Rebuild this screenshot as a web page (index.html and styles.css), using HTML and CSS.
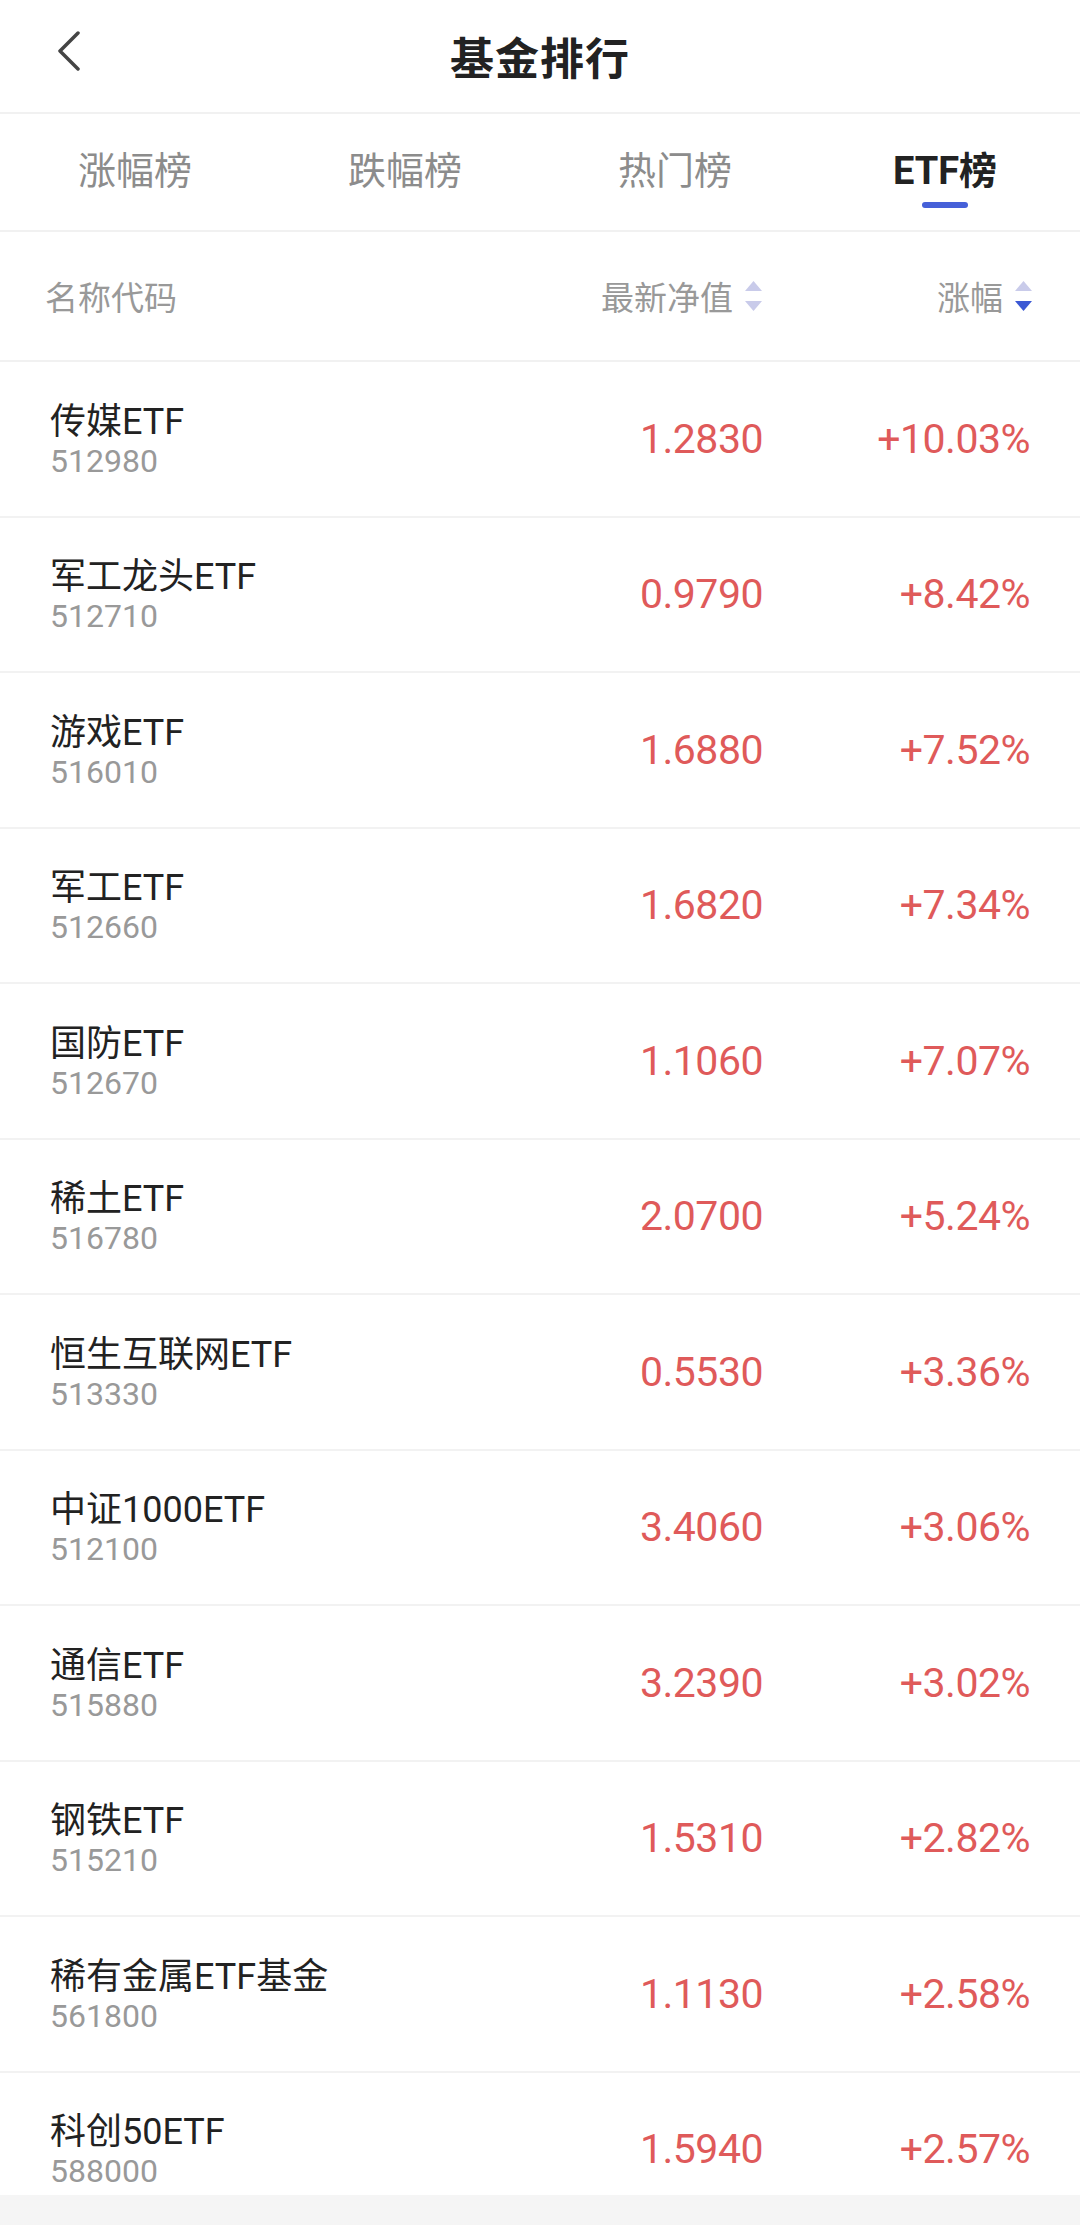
FILE: index.html
```html
<!DOCTYPE html>
<html lang="zh-CN">
<head>
    <meta charset="UTF-8">
    <meta name="viewport" content="width=device-width, initial-scale=1.0">
    <title>基金排行</title>
    <link rel="stylesheet" href="styles.css">
</head>
<body>
<div class="page">
    <header class="topbar">
        <svg class="back" width="24" height="40" viewBox="0 0 24 40"><polyline points="21,2 3,20 21,38" fill="none" stroke="#444" stroke-width="3.5" stroke-linecap="round" stroke-linejoin="round"/></svg>
        <h1>基金排行</h1>
    </header>

    <nav class="tabs">
        <div class="tab">涨幅榜</div>
        <div class="tab">跌幅榜</div>
        <div class="tab">热门榜</div>
        <div class="tab active">ETF榜</div>
    </nav>

    <div class="thead">
        <div class="th">名称代码</div>
        <div class="th right">最新净值
            <svg class="sort" width="17" height="30" viewBox="0 0 17 30"><polygon points="8.5,0 17,10 0,10" fill="#c9cbea"/><polygon points="0,20 17,20 8.5,30" fill="#c9cbea"/></svg>
        </div>
        <div class="th right">涨幅
            <svg class="sort" width="17" height="30" viewBox="0 0 17 30"><polygon points="8.5,0 17,10 0,10" fill="#c9cbea"/><polygon points="0,20 17,20 8.5,30" fill="#3c59d4"/></svg>
        </div>
    </div>

    <div class="list">
        <div class="row"><div class="fund"><div class="name">传媒ETF</div><div class="code">512980</div></div><div class="nav">1.2830</div><div class="pct">+10.03%</div></div>
        <div class="row"><div class="fund"><div class="name">军工龙头ETF</div><div class="code">512710</div></div><div class="nav">0.9790</div><div class="pct">+8.42%</div></div>
        <div class="row"><div class="fund"><div class="name">游戏ETF</div><div class="code">516010</div></div><div class="nav">1.6880</div><div class="pct">+7.52%</div></div>
        <div class="row"><div class="fund"><div class="name">军工ETF</div><div class="code">512660</div></div><div class="nav">1.6820</div><div class="pct">+7.34%</div></div>
        <div class="row"><div class="fund"><div class="name">国防ETF</div><div class="code">512670</div></div><div class="nav">1.1060</div><div class="pct">+7.07%</div></div>
        <div class="row"><div class="fund"><div class="name">稀土ETF</div><div class="code">516780</div></div><div class="nav">2.0700</div><div class="pct">+5.24%</div></div>
        <div class="row"><div class="fund"><div class="name">恒生互联网ETF</div><div class="code">513330</div></div><div class="nav">0.5530</div><div class="pct">+3.36%</div></div>
        <div class="row"><div class="fund"><div class="name">中证1000ETF</div><div class="code">512100</div></div><div class="nav">3.4060</div><div class="pct">+3.06%</div></div>
        <div class="row"><div class="fund"><div class="name">通信ETF</div><div class="code">515880</div></div><div class="nav">3.2390</div><div class="pct">+3.02%</div></div>
        <div class="row"><div class="fund"><div class="name">钢铁ETF</div><div class="code">515210</div></div><div class="nav">1.5310</div><div class="pct">+2.82%</div></div>
        <div class="row"><div class="fund"><div class="name">稀有金属ETF基金</div><div class="code">561800</div></div><div class="nav">1.1130</div><div class="pct">+2.58%</div></div>
        <div class="row"><div class="fund"><div class="name">科创50ETF</div><div class="code">588000</div></div><div class="nav">1.5940</div><div class="pct">+2.57%</div></div>
    </div>

    <div class="bottom"></div>
</div>
</body>
</html>
```

FILE: styles.css
```css
* { box-sizing: border-box; }
body { margin: 0; background: #fff; font-family: Roboto, "Noto Sans CJK SC", sans-serif; color: #222; }
.page { height: 100vh; display: flex; flex-direction: column; overflow: hidden; }

.topbar { position: relative; height: 114px; border-bottom: 2px solid #f1f1f1; display: flex; align-items: center; justify-content: center; flex-shrink: 0; }
.topbar h1 { margin: 0; font-size: 44px; font-weight: 700; letter-spacing: 1px; color: #222; }
.back { position: absolute; left: 57px; top: 31px; }

.tabs { display: grid; grid-template-columns: repeat(4, 1fr); height: 118px; border-bottom: 2px solid #f1f1f1; flex-shrink: 0; }
.tab { display: flex; flex-direction: column; align-items: center; padding-top: 33px; font-size: 38px; line-height: 48px; color: #8c8c8c; }
.tab.active { color: #222; font-weight: 700; }
.tab.active::after { content: ""; width: 46px; height: 6px; border-radius: 3px; background: #4660d8; margin-top: 7px; }

.thead { display: grid; grid-template-columns: 1fr 240px 270px; align-items: center; height: 130px; padding: 0 48px 0 45px; border-bottom: 2px solid #f1f1f1; flex-shrink: 0; }
.th { font-size: 33px; color: #999; display: flex; align-items: center; }
.th.right { justify-content: flex-end; }
.sort { margin-left: 12px; }

.list { flex: 1; overflow: hidden; }
.row { display: grid; grid-template-columns: 1fr 240px 267px; align-items: center; height: 155.5px; padding: 0 50px; border-bottom: 2px solid #f2f2f2; }
.name { font-size: 36px; line-height: 44px; color: #222; }
.code { font-size: 32px; line-height: 34px; color: #999; }
.nav, .pct { text-align: right; font-size: 41px; letter-spacing: -0.5px; color: #df5a5a; }

.bottom { height: 30px; background: #f5f5f5; flex-shrink: 0; }
```
